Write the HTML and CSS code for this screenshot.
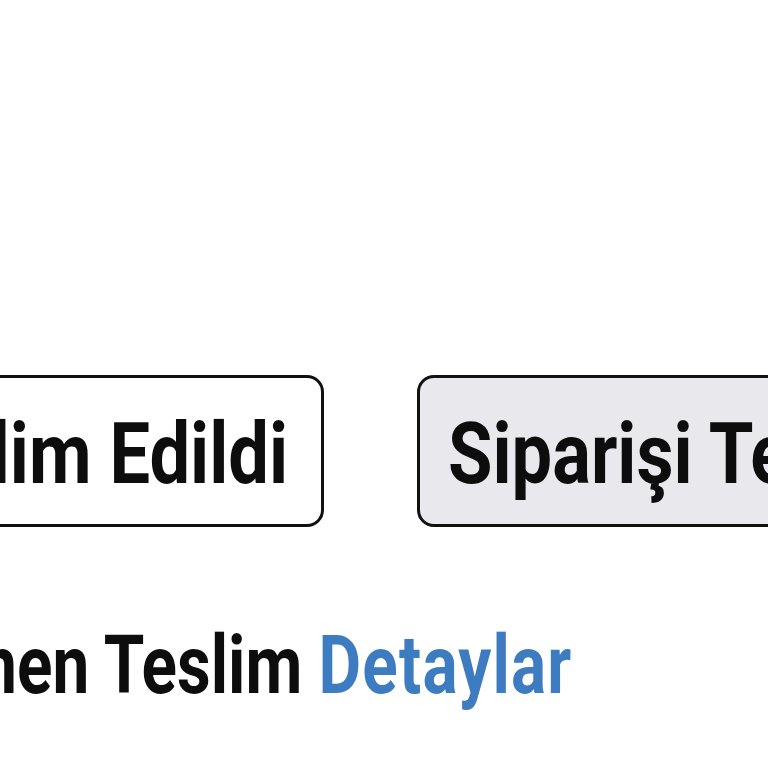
FILE: index.html
```html
<!DOCTYPE html>
<html lang="tr">
<head>
  <meta charset="UTF-8" />
  <meta name="viewport" content="width=device-width, initial-scale=1.0" />
  <title>Sipariş</title>
  <link rel="stylesheet" href="styles.css">
</head>
<body>

<div class="order">
  <div class="actions">
    <button class="btn btn-done"><span class="label">Teslim Edildi</span></button>
    <button class="btn btn-deliver"><span class="label">Siparişi Teslim Et</span></button>
  </div>

  <div class="summary">
    <span class="summary-text">Hemen Teslim <a href="#" class="details">Detaylar</a></span>
  </div>
</div>

</body>
</html>
```

FILE: styles.css
```css
body {
  margin: 0;
  padding: 0;
  background: #fff;
  font-family: 'Roboto', sans-serif;
  overflow: hidden;
  height: 100vh;
}

.order {
  padding-top: 375px;
}

.actions {
  display: flex;
  gap: 93px;
  margin-left: -176px;
}

.btn {
  flex: none;
  box-sizing: border-box;
  display: flex;
  align-items: center;
  height: 152px;
  border: 3px solid #111;
  border-radius: 17px;
  font-family: inherit;
  font-size: 86px;
  font-weight: 700;
  color: #0d0d0d;
  padding-top: 6px;
  white-space: nowrap;
}

.label {
  display: inline-block;
  transform: scaleX(0.84);
}

.btn-done {
  width: 500px;
  background: #fff;
  justify-content: flex-end;
  padding-right: 33px;
}

.btn-done .label {
  transform-origin: right center;
}

.btn-deliver {
  width: 600px;
  background: #e9e9ed;
  justify-content: flex-start;
  padding-left: 28px;
}

.btn-deliver .label {
  transform-origin: left center;
}

.summary {
  display: flex;
  justify-content: flex-end;
  width: 573px;
  margin-top: 90px;
  font-size: 82px;
  font-weight: 700;
  color: #0d0d0d;
  white-space: nowrap;
}

.summary-text {
  display: inline-block;
  transform: scaleX(0.8);
  transform-origin: right center;
}

.details {
  color: #3d7cc0;
  text-decoration: none;
  letter-spacing: 1.5px;
}
```
